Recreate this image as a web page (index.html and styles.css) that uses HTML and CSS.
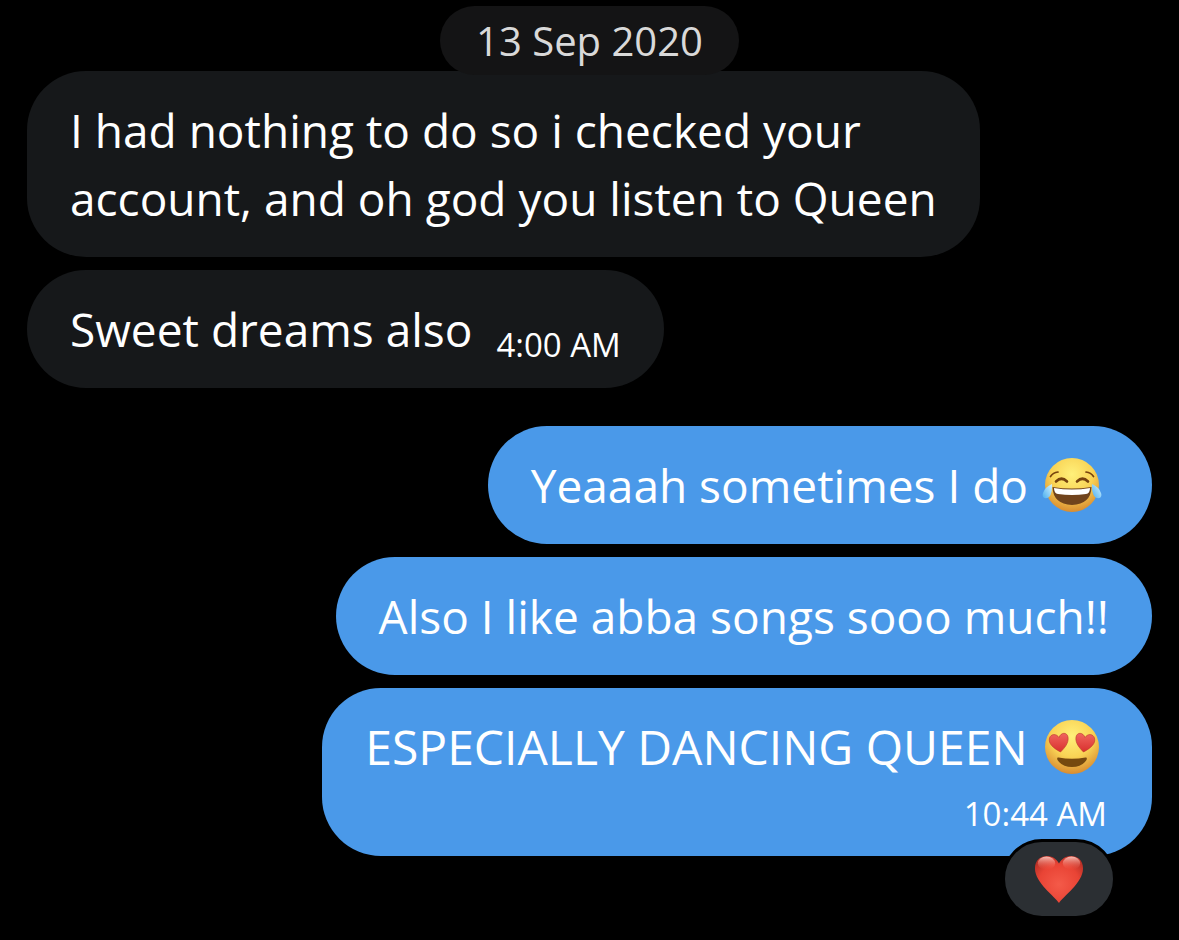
FILE: index.html
```html
<!DOCTYPE html>
<html lang="en">
<head>
<meta charset="utf-8">
<meta name="viewport" content="width=device-width, initial-scale=1">
<title>Messages</title>
<link rel="stylesheet" href="styles.css">
</head>
<body>
<main class="chat">
  <div class="date-row"><time class="date" datetime="2020-09-13">13 Sep 2020</time></div>
  <section class="group received">
    <p class="bubble">I had nothing to do so i checked your<br>account, and oh god you listen to Queen</p>
    <p class="bubble">Sweet dreams also <time class="time">4:00 AM</time></p>
  </section>
  <section class="group sent">
    <p class="bubble has-emoji">Yeaaah sometimes I do
      <svg class="emoji" viewBox="0 0 60 60" role="img" aria-label="Face with tears of joy">
        <defs>
          <radialGradient id="face" cx="50%" cy="30%" r="70%"><stop offset="0" stop-color="#fff07a"/><stop offset=".55" stop-color="#f9d355"/><stop offset="1" stop-color="#d98c30"/></radialGradient>
          <linearGradient id="tear" x1="1" y1="0" x2="0" y2="1"><stop offset="0" stop-color="#d6f4ff"/><stop offset="1" stop-color="#4aaeef"/></linearGradient>
        </defs>
        <circle cx="30" cy="30" r="27" fill="url(#face)"/>
        <g fill="none" stroke="#76430e" stroke-linecap="round">
          <path d="M8.500 21.500Q11 17.500 16 17M44 17Q49 17.500 51.500 21.500" stroke-width="1.700"/>
          <path d="M14 26.500Q19.500 21 25 26.500M35 26.500Q40.500 21 46 26.500" stroke-width="2.600"/>
        </g>
        <path d="M10.500 32Q30 35 49.500 32Q49 49 30 50Q11 49 10.500 32Z" fill="#70431c"/>
        <path d="M12 33Q30 36 48 33Q48 38.500 44 39Q30 41 16 39Q12 38.500 12 33Z" fill="#fff"/>
        <path d="M10 29Q3 32 1 38C-1 44 6 45 8.500 40Q10.500 36 10 29Z" fill="url(#tear)"/>
        <path d="M50 29Q57 32 59 38C61 44 54 45 51.500 40Q49.500 36 50 29Z" fill="url(#tear)"/>
      </svg></p>
    <p class="bubble">Also I like abba songs sooo much!!</p>
    <div class="bubble has-emoji stacked">
      <p class="text">ESPECIALLY DANCING QUEEN
        <svg class="emoji" viewBox="0 0 60 60" role="img" aria-label="Smiling face with heart eyes">
          <defs><linearGradient id="love" x1="0" y1="0" x2="0" y2="1"><stop offset="0" stop-color="#f0655e"/><stop offset="1" stop-color="#d8302e"/></linearGradient></defs>
          <circle cx="30" cy="30" r="27" fill="url(#face)"/>
          <path d="M18.500 35C11 31 6 26.500 7.500 21C9 16.500 14.500 16.500 17 20.500C19 15 25 15 26 20C27 26 22.500 31 18.500 35Z" fill="url(#love)" stroke="#b9372a" stroke-width=".6"/>
          <path d="M41.500 35C49 31 54 26.500 52.500 21C51 16.500 45.500 16.500 43 20.500C41 15 35 15 34 20C33 26 37.500 31 41.500 35Z" fill="url(#love)" stroke="#b9372a" stroke-width=".6"/>
          <path d="M16.500 40.500Q30 43 43.500 40.500Q45.500 40 44.500 43Q40 50 30 50Q20 50 15.500 43Q14.500 40 16.500 40.500Z" fill="#76490f"/>
        </svg></p>
      <time class="time">10:44 AM</time>
      <button class="reaction" type="button" aria-label="Heart reaction">
        <svg class="heart" viewBox="0 0 52 52" aria-hidden="true">
          <defs>
            <radialGradient id="heart-fill" cx="50%" cy="60%" r="65%"><stop offset="0" stop-color="#f45a49"/><stop offset=".65" stop-color="#e94435"/><stop offset="1" stop-color="#b93026"/></radialGradient>
            <linearGradient id="shine" x1="0" y1="0" x2="0" y2="1"><stop offset="0" stop-color="#ffd3ca" stop-opacity=".9"/><stop offset="1" stop-color="#f45a49" stop-opacity="0"/></linearGradient>
          </defs>
          <path d="M26 51C22 44 1 30 1 15C1 0 20-2 26 10C32-2 51 0 51 15C51 30 30 44 26 51Z" fill="url(#heart-fill)"/>
          <ellipse cx="13" cy="9.500" rx="9" ry="7" fill="url(#shine)"/>
          <ellipse cx="39" cy="9.500" rx="9" ry="7" fill="url(#shine)"/>
        </svg>
      </button>
    </div>
  </section>
</main>
</body>
</html>
```
FILE: styles.css
```css
* { box-sizing: border-box; }
body {
  margin: 0;
  background: #000;
  color: #fff;
  font-family: "Open Sans", "Noto Sans", sans-serif;
  font-size: 46px;
  line-height: 68px;
}
p { margin: 0; }
.chat {
  display: flex;
  flex-direction: column;
  padding: 6px 27px 83px;
}
.date-row {
  position: relative;
  z-index: 1;
  display: flex;
  justify-content: center;
  margin-bottom: -4px;
}
.date {
  padding: 0 36px;
  border-radius: 35px;
  background: #141415;
  color: #d9d9d9;
  font-size: 40px;
  line-height: 69px;
}
.group {
  display: flex;
  flex-direction: column;
  gap: 13px;
}
.received { align-items: flex-start; }
.sent {
  align-items: flex-end;
  margin-top: 38px;
}
.bubble {
  padding: 25px 43px;
  border-radius: 59px;
  background: #16181a;
}
.sent .bubble { background: #4a99e9; }
.sent .has-emoji { padding-right: 50px; }
.time {
  margin-left: 12px;
  font-size: 33px;
  line-height: 34px;
  vertical-align: -10px;
}
.emoji {
  width: 60px;
  height: 60px;
  margin-left: 2px;
  vertical-align: -12px;
}
.stacked {
  position: relative;
  display: flex;
  flex-direction: column;
}
.text {
  height: 68px;
  font-size: 48px;
}
.stacked .time {
  align-self: flex-end;
  margin-top: 16px;
  margin-right: -5px;
}
.reaction {
  position: absolute;
  right: 36px;
  bottom: -63px;
  display: flex;
  align-items: center;
  justify-content: center;
  width: 114px;
  height: 80px;
  padding: 0;
  border: 3px solid #000;
  border-radius: 40px;
  background: #2b2f33;
}
.heart {
  width: 50px;
  height: 50px;
}
```
